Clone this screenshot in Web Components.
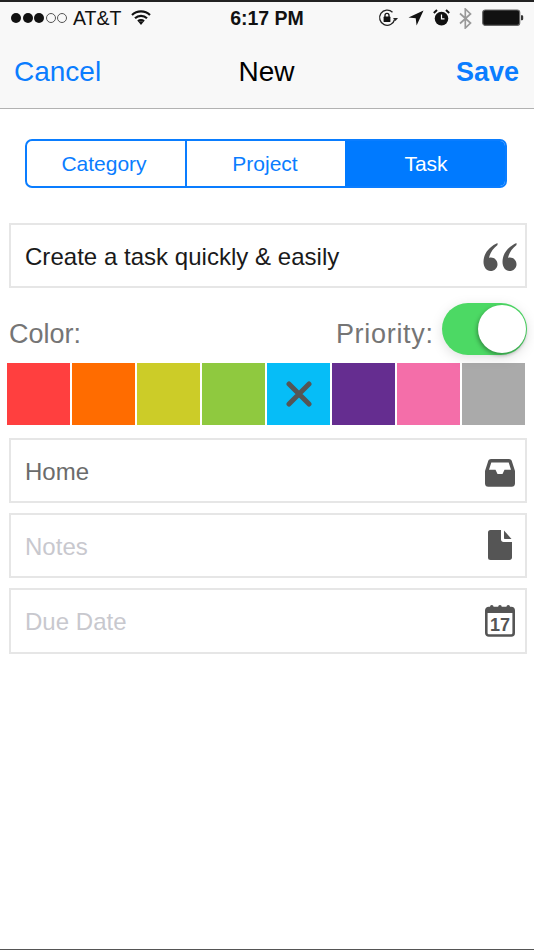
<!DOCTYPE html>
<html><head><meta charset="utf-8">
<style>
html,body{margin:0;padding:0;background:#fff}
body{width:534px;height:950px;overflow:hidden;font-family:"Liberation Sans",Arial,sans-serif;display:flex;flex-direction:column;position:relative}
</style></head><body>
<nav-header></nav-header>
<seg-control></seg-control>
<form-field value="Create a task quickly &amp; easily" tone="dark" icon="quote" style="margin-top:35px"></form-field>
<option-row></option-row>
<color-strip></color-strip>
<form-field value="Home" tone="mid" icon="inbox" style="margin-top:13px"></form-field>
<form-field value="Notes" tone="light" icon="note" style="margin-top:10px"></form-field>
<form-field value="Due Date" tone="light" icon="cal" style="margin-top:10px;height:66px"></form-field>
<bottom-line></bottom-line>
<script>
const def=(name,html)=>customElements.define(name,class extends HTMLElement{
  connectedCallback(){ if(this.shadowRoot) return; const r=this.attachShadow({mode:'open'}); r.innerHTML=typeof html==='function'?html(this):html; }
});
def('status-bar',`<style>
:host{display:block;height:34px;color:#111;position:relative;font-size:19.5px}
.l{display:flex;align-items:center;position:absolute;left:11px;top:0;height:32px}
.dots{display:flex;gap:1.5px;margin-right:6px}
.d{width:10px;height:10px;border-radius:50%;background:#111;box-sizing:border-box}
.d.o{background:none;border:1px solid #555}
.t{position:absolute;left:0;right:0;top:0;height:32px;line-height:33px;text-align:center;font-weight:700;font-size:19.5px}
.r{position:absolute;left:378px;top:4px;display:flex;align-items:center;height:24px}
svg{display:block}
</style>
<div class="l"><div class="dots"><i class="d"></i><i class="d"></i><i class="d"></i><i class="d o"></i><i class="d o"></i></div><span>AT&amp;T</span>
<svg width="22" height="16" viewBox="0 0 22 16" style="margin-left:9px;margin-top:-2px"><path d="M2 6a13 13 0 0 1 18 0M5 9.300a8.600 8.600 0 0 1 12 0M8 12.400a4.400 4.400 0 0 1 6 0" fill="none" stroke="#111" stroke-width="2.200"/><path d="M8.800 13.200 11 16l2.200-2.800a3.200 3.200 0 0 0-4.400 0z" fill="#111"/></svg></div>
<div class="t">6:17 PM</div>
<div class="r">
<svg width="20" height="18" viewBox="0 0 20 18"><path d="M16.600 10.500A7.600 7.600 0 1 1 14.500 3.200" fill="none" stroke="#222" stroke-width="1.300"/><path d="M15 9h5l-2.500 3z" fill="#222"/><rect x="5.600" y="7.600" width="6.800" height="5.400" rx=".6" fill="#111"/><path d="M7 8V6.300a2 2 0 0 1 4 0V8" fill="none" stroke="#111" stroke-width="1.300"/></svg>
<svg width="16" height="16" viewBox="0 0 16 16" style="margin-left:10px"><path d="M15.500.5.5 7.400l7.200.9.9 7.200z" fill="#111"/></svg>
<svg width="17" height="18" viewBox="0 0 17 18" style="margin-left:9px"><circle cx="8.500" cy="9.600" r="6.800" fill="#111"/><path d="M8.500 5.500v4.300h3" fill="none" stroke="#fff" stroke-width="1.200"/><path d="M.8 4 4 1M16.200 4 13 1" stroke="#111" stroke-width="2"/></svg>
<svg width="13" height="21" viewBox="0 0 13 21" style="margin-left:9px"><path d="M1 5.500 11.500 15 6.300 20V1l5.200 5L1 15.500" fill="none" stroke="#999" stroke-width="1.700"/></svg>
<svg width="42" height="18" viewBox="0 0 42 18" style="margin-left:10px"><rect x=".7" y="1" width="37" height="15.400" rx="2.600" fill="#111" stroke="#666" stroke-width="1.200"/><path d="M39 6.200h1a1.200 1.200 0 0 1 1.200 1.200v2.600a1.200 1.200 0 0 1-1.200 1.200h-1z" fill="#333"/></svg>
</div>`);
def('nav-header',`<style>
:host{display:block;height:109px;box-sizing:border-box;background:#f8f8f8;border-top:2px solid #222;border-bottom:1px solid #b2b2b2}
.bar{display:grid;grid-template-columns:1fr auto 1fr;align-items:center;height:72px;padding:0 15px 0 14px;font-size:28px}
.c{color:#000}.b{color:#0a7dff}
.s{justify-self:end;font-weight:700;font-size:27px}
</style><status-bar></status-bar><div class="bar"><span class="b">Cancel</span><span class="c">New</span><span class="b s">Save</span></div>`);
def('seg-control',`<style>
:host{display:flex;margin:30px 27px 0 25px;height:49px;box-sizing:border-box;border:2px solid #0a7dff;border-radius:7px;overflow:hidden;font-size:21px;color:#0a7dff}
div{flex:1;display:flex;align-items:center;justify-content:center;box-sizing:border-box}
.a{border-left:2px solid #0a7dff}
.t{background:#007aff;color:#fff;padding-left:2px}
</style><div style="flex:0 0 158px;padding-right:4px">Category</div><div class="a" style="flex:0 0 160px;padding-right:2px">Project</div><div class="t">Task</div>`);
const icons={
quote:`<svg width="36" height="30" viewBox="0 0 36 30" style="margin-top:2px"><g fill="#555"><path d="M15.500 1C9 4 1.500 10 1.500 20c0 5 3 9 7 9s7-3 7-6.800-3-6.700-6.500-6.700c-.8 0-1.500.1-2 .4C8 11 11 6.500 15.500 3z"/><path d="M34.500 1C28 4 20.500 10 20.500 20c0 5 3 9 7 9s7-3 7-6.800-3-6.700-6.500-6.700c-.8 0-1.500.1-2 .4C27 11 30 6.500 34.500 3z"/></g></svg>`,
inbox:`<svg width="30" height="28" viewBox="0 0 30 28" style="margin-top:4px"><path d="M6 0h18c1.300 0 2.200.7 2.700 1.800L30 12v12.500c0 2-1.300 3.300-3.300 3.300H3.300C1.300 27.800 0 26.500 0 24.500V12l3.300-10.200C3.800.7 4.700 0 6 0zM6.300 3.500 4 10.700h6.500l2 4.300h5l2-4.300H26l-2.300-7.200z" fill="#555" fill-rule="evenodd"/></svg>`,
note:`<svg width="24" height="30" viewBox="0 0 24 30" style="margin-top:-2px"><path d="M2.500 0H13v9.500c0 1.400 1.100 2.500 2.500 2.500H24v15.500c0 1.400-1.100 2.500-2.500 2.500h-19A2.500 2.500 0 0 1 0 27.500v-25A2.500 2.500 0 0 1 2.500 0z" fill="#555"/><path d="M16 .5 23.500 9H16.800a.8.8 0 0 1-.8-.8z" fill="#555"/></svg>`,
cal:`<svg width="30" height="33" viewBox="0 0 30 33" style="margin-top:-2px"><rect x="1.300" y="4" width="27.400" height="27.500" rx="2.500" fill="none" stroke="#555" stroke-width="2.600"/><rect x="1.500" y="4" width="27" height="5" fill="#555"/><g fill="#555"><rect x="5" y="1" width="3.500" height="6" rx="1.700"/><rect x="13.200" y="1" width="3.500" height="6" rx="1.700"/><rect x="21.500" y="1" width="3.500" height="6" rx="1.700"/></g><text x="15" y="27" text-anchor="middle" font-family="Liberation Sans" font-weight="700" font-size="18" fill="#555">17</text></svg>`
};
def('form-field',el=>`<style>
:host{display:flex;align-items:center;justify-content:space-between;box-sizing:border-box;margin:0 7px 0 9px;height:65px;border:2px solid #e6e6e6;padding:0 7px 0 14px;font-size:24px;letter-spacing:.03px}
.dark{color:#1a1a1a}.mid{color:#6b6b6b}.light{color:#c8c8ce}
span{padding-top:2px}
.i{display:flex;width:36px;justify-content:center;align-items:center}
svg{display:block}
</style><span class="${el.getAttribute('tone')}">${el.getAttribute('value').replace('&','&amp;')}</span><div class="i">${icons[el.getAttribute('icon')]}</div>`);
def('toggle-switch',`<style>
:host{display:block;width:85px;height:52px;box-sizing:border-box;border-radius:26px;background:#4cd964;position:relative;filter:drop-shadow(0 3px 6px rgba(0,0,0,.12))}
i{position:absolute;right:1.500px;top:2px;width:48px;height:48px;border-radius:50%;background:#fff;box-shadow:-1px 2px 4px rgba(0,0,0,.35)}
</style><i></i>`);
def('option-row',`<style>
:host{display:flex;align-items:center;justify-content:space-between;height:52px;margin:15px 7px 0 9px;font-size:27px;color:#757575}
.p{display:flex;align-items:center;gap:9px}
span{padding-top:10px}
.pr{letter-spacing:.7px;margin-right:-.7px}
</style><span>Color:</span><div class="p"><span class="pr">Priority:</span><toggle-switch></toggle-switch></div>`);
def('color-strip',`<style>
:host{display:flex;gap:1.670px;margin:8px 9px 0 6.500px;height:62px}
div{flex:1;display:flex;align-items:center;justify-content:center}
svg{display:block;margin-left:1px}
</style>
<div style="background:#ff3f3f"></div><div style="background:#ff6c00"></div><div style="background:#cccc28"></div><div style="background:#8fc93f"></div>
<div style="background:#06bdf7"><svg width="26" height="26" viewBox="0 0 26 26"><path d="M3 3l20 20M23 3 3 23" stroke="#555" stroke-width="5" stroke-linecap="round"/></svg></div>
<div style="background:#652d90"></div><div style="background:#f46ea9"></div><div style="background:#aaa"></div>`);
def('bottom-line',`<style>:host{display:block;position:absolute;left:0;right:0;bottom:0;height:1px;background:#555}</style>`);
</script>
</body></html>
